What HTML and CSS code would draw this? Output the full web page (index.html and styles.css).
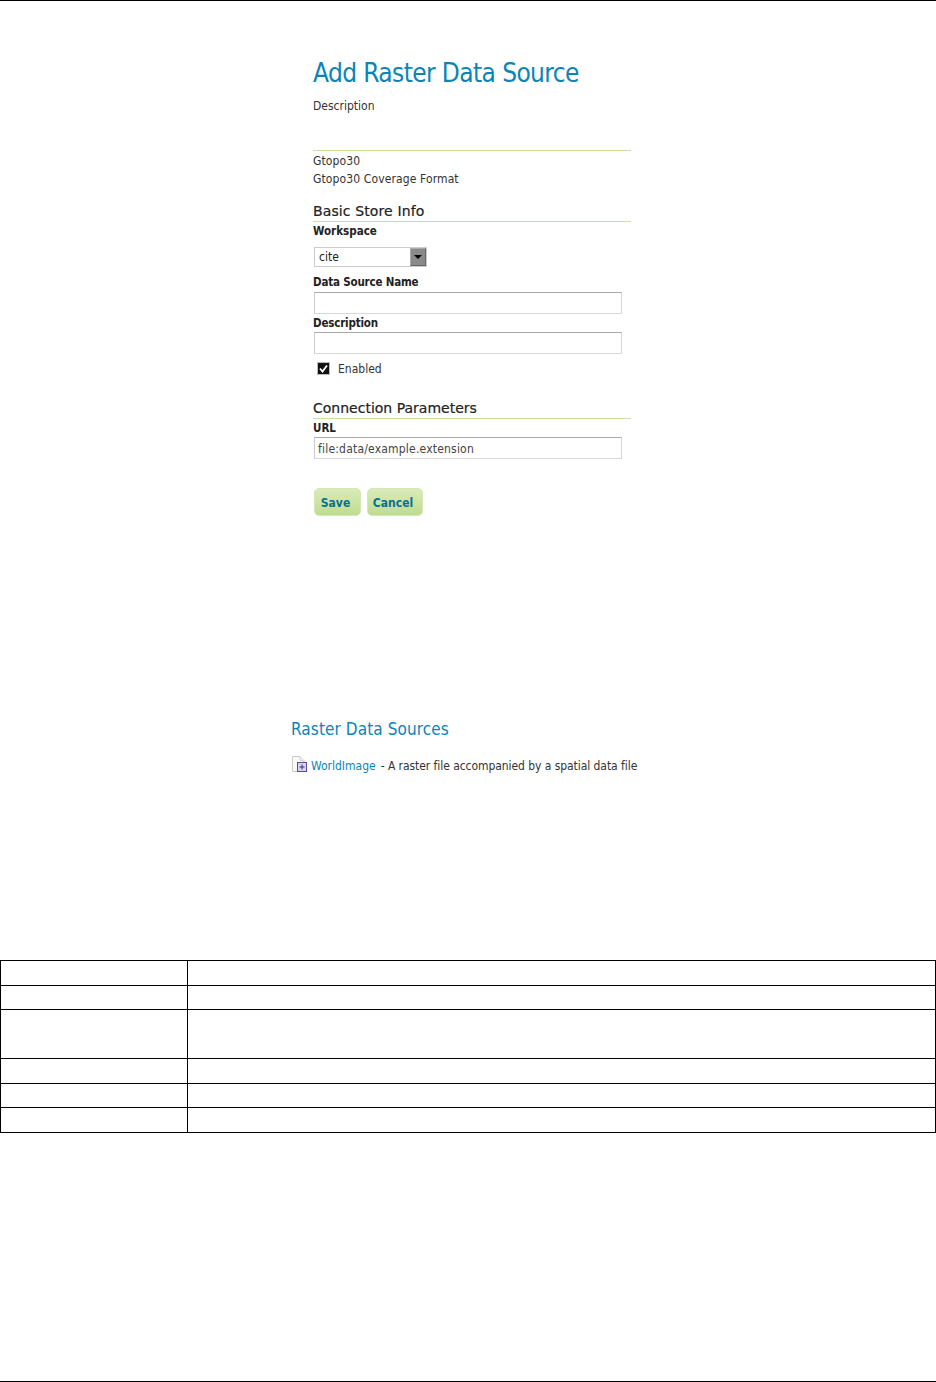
FILE: index.html
```html
<!DOCTYPE html>
<html lang="en">
<head>
    <meta charset="UTF-8">
    <title>Add Raster Data Source</title>
    <link rel="stylesheet" href="styles.css">
</head>
<body>
    <div class="page">
        <!-- Formulario -->
        <form class="store-form">
            <h1>Add Raster Data Source</h1>
            <p class="form-desc">Description</p>
            <div class="format-info">
                <p>Gtopo30</p>
                <p>Gtopo30 Coverage Format</p>
            </div>

            <h2 class="basic-title">Basic Store Info</h2>
            <label class="field-label">Workspace</label>
            <div class="select-box">
                <span>cite</span>
                <span class="select-btn"><span class="select-arrow"></span></span>
            </div>
            <label class="field-label name-label">Data Source Name</label>
            <div class="text-input"></div>
            <label class="field-label desc-label">Description</label>
            <div class="text-input"></div>
            <div class="check-row">
                <svg class="check-icon" width="13" height="13" viewBox="0 0 13 13">
                    <rect x="0.5" y="0.5" width="12" height="12" fill="#111" stroke="#bbb"/>
                    <path d="M3 6.5 L5.5 9.5 L10 3.5" fill="none" stroke="#fff" stroke-width="1.8"/>
                </svg>
                <span class="check-text">Enabled</span>
            </div>

            <h2 class="conn-title">Connection Parameters</h2>
            <label class="field-label">URL</label>
            <div class="text-input url-input">file:data/example.extension</div>

            <div class="button-row">
                <button type="button" class="green-btn save-btn">Save</button>
                <button type="button" class="green-btn cancel-btn">Cancel</button>
            </div>
        </form>

        <!-- Lista de fontes -->
        <div class="sources">
            <h3>Raster Data Sources</h3>
            <div class="source-row">
                <svg class="source-icon" width="17" height="18" viewBox="0 0 17 18">
                    <path d="M1.5 1.5 H9 L13 5.5 V16.5 H1.5 Z" fill="#fafafa" stroke="#c9c9c9"/>
                    <path d="M9 1.5 V5.5 H13" fill="#eee" stroke="#d5d5d5"/>
                    <rect x="6.5" y="7.5" width="9" height="9" fill="#d9d4ee" stroke="#5b4a9c"/>
                    <path d="M8.5 12 H13.5 M11 9.5 V14.5" stroke="#3f2f86" stroke-width="1"/>
                </svg>
                <a class="source-link">WorldImage</a>
                <span class="source-text">- A raster file accompanied by a spatial data file</span>
            </div>
        </div>

        <table class="empty-table">
            <tr><td class="col-a"></td><td></td></tr>
            <tr><td></td><td></td></tr>
            <tr class="tall"><td></td><td></td></tr>
            <tr><td></td><td></td></tr>
            <tr><td></td><td></td></tr>
            <tr><td></td><td></td></tr>
        </table>
    </div>
</body>
</html>
```
FILE: styles.css
```css
* {
    margin: 0;
    padding: 0;
    box-sizing: border-box;
}

body {
    background: #fff;
    color: #333;
    font-family: "DejaVu Sans Condensed", "DejaVu Sans", Verdana, sans-serif;
    font-stretch: condensed;
    font-size: 12px;
}

.page {
    height: 1382px;
    border-top: 1px solid #000;
    border-bottom: 1px solid #000;
    overflow: hidden;
}

/* Formulario */
.store-form {
    width: 318px;
    margin-left: 313px;
    padding-top: 56px;
}

h1 {
    font-size: 26px;
    font-weight: normal;
    line-height: 33px;
    color: #0a85b8;
    letter-spacing: -0.6px;
}

.form-desc {
    margin-top: 7px;
    line-height: 18px;
}

.format-info {
    margin-top: 35px;
    padding-top: 1px;
    border-top: 1px solid #c8e39c;
}

.format-info p {
    line-height: 18px;
    letter-spacing: 0.12px;
}

h2 {
    font-family: "DejaVu Sans", Verdana, sans-serif;
    font-stretch: normal;
    font-size: 14px;
    font-weight: normal;
    line-height: 18px;
    color: #222;
    border-bottom: 1px solid #c8e39c;
    -webkit-text-stroke: 0.2px #222;
}

.basic-title {
    margin-top: 14px;
    height: 20px;
    letter-spacing: 0.12px;
}

.conn-title {
    margin-top: 21px;
    height: 20px;
}

.field-label {
    display: block;
    font-size: 11.5px;
    font-weight: bold;
    line-height: 18px;
    color: #222;
}

.select-box {
    display: flex;
    align-items: center;
    justify-content: space-between;
    width: 113px;
    height: 20px;
    margin: 7px 0 0 1px;
    padding-left: 4px;
    border: 1px solid #ccc;
    color: #222;
}

.select-btn {
    display: flex;
    align-items: center;
    justify-content: center;
    width: 16px;
    height: 18px;
    background: #8a8a8a;
    border: 1px solid #666;
    border-top-color: #aaa;
    border-left-color: #aaa;
}

.select-arrow {
    width: 0;
    height: 0;
    border-left: 4px solid transparent;
    border-right: 4px solid transparent;
    border-top: 4px solid #000;
}

.name-label {
    height: 19px;
    margin-top: 6px;
    letter-spacing: -0.18px;
}

.desc-label {
    margin-top: 0;
    letter-spacing: -0.18px;
}

.text-input {
    width: 308px;
    height: 22px;
    margin-left: 1px;
    padding-left: 3px;
    border: 1px solid #d8d8d8;
    border-top-color: #aaa;
    border-left-color: #ccc;
    font-size: 12px;
    line-height: 22px;
    color: #444;
}

.check-row {
    display: flex;
    align-items: center;
    gap: 8px;
    height: 18px;
    margin: 6px 0 0 4px;
}

.check-icon {
    margin-top: -1px;
}

.check-text {
    margin-top: 0;
}

.url-input {
    margin-top: 0;
    letter-spacing: 0.2px;
}

.button-row {
    display: flex;
    gap: 6px;
    margin: 29px 0 0 1px;
}

.green-btn {
    height: 28px;
    padding: 2px 4px 0 0;
    border: 1px solid #d4e7b4;
    border-radius: 5px;
    background: linear-gradient(to bottom, #d9ebb9, #bfdc90);
    color: #0a6f96;
    font-family: "DejaVu Sans Condensed", "DejaVu Sans", Verdana, sans-serif;
    font-stretch: condensed;
    font-size: 12px;
    font-weight: bold;
}

.save-btn {
    width: 47px;
}

.cancel-btn {
    width: 56px;
}

/* Lista de fontes */
.sources {
    margin: 201px 0 0 291px;
}

h3 {
    font-size: 17px;
    font-weight: normal;
    line-height: 24px;
    color: #0a85b8;
    letter-spacing: 0.1px;
}

.source-row {
    display: flex;
    align-items: flex-end;
    height: 18px;
    margin-top: 14px;
    white-space: nowrap;
}

.source-icon {
    margin: 0 3px 0 0;
}

.source-link {
    margin-right: 5px;
    color: #0a85b8;
}

.source-text {
    letter-spacing: -0.06px;
}

/* Tabela vazia */
.empty-table {
    width: 936px;
    margin-top: 187px;
    border-collapse: collapse;
}

.empty-table td {
    height: 24.5px;
    border: 1px solid #000;
}

.empty-table .col-a {
    width: 187px;
}

.empty-table .tall td {
    height: 49px;
}
```
